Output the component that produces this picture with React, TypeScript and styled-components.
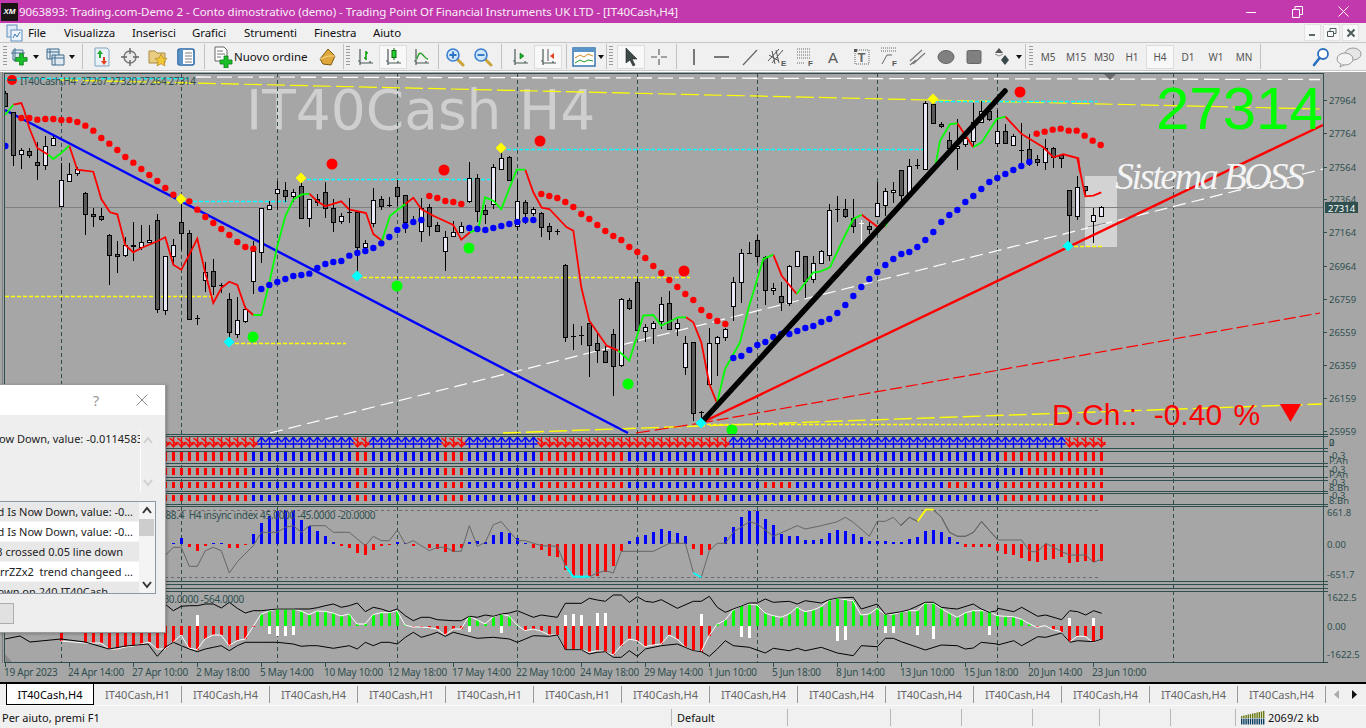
import React from 'react';
import styled, { createGlobalStyle } from 'styled-components';

const UI = '"Noto Sans", "Open Sans", "DejaVu Sans", sans-serif';
const Global = createGlobalStyle`
  html, body { margin: 0; padding: 0; width: 1366px; height: 728px; overflow: hidden; background: #f0f0f0; font-family: ${UI}; }
`;
const Page = styled.div`display: flex; flex-direction: column; width: 1366px; height: 728px; overflow: hidden;`;
const TitleBar = styled.div`display: flex; align-items: center; height: 23px; background: #c238ad; color: #fff; font-size: 11.5px;`;
const Logo = styled.div`width: 17px; height: 18px; margin: 0 1px 0 1px; background: #1a1414; color: #fff; font: italic bold 8px "Liberation Sans", sans-serif; display: flex; align-items: center; justify-content: center;`;
const TitleText = styled.div`flex: 1; white-space: nowrap; opacity: .92; letter-spacing: -.05px;`;
const WinBtn = styled.div`width: 46px; height: 23px; display: flex; align-items: center; justify-content: center;`;
const MenuBar = styled.div`display: flex; align-items: center; height: 20px; background: #f0f0f0; font-size: 11.5px; letter-spacing: -.1px; color: #111; border-bottom: 1px solid #c6c6c6;`;
const MenuIcon = styled.div`width: 28px; display: flex; justify-content: center; box-sizing: border-box;`;
const MenuItem = styled.div<{ $w: number }>`width: ${p => p.$w}px; white-space: nowrap;`;
const MdiGroup = styled.div`margin-left: auto; display: flex; gap: 2px; padding-right: 7px;`;
const MdiBtn = styled.div`width: 17px; height: 17px; background: #f8f8f8; border: 1px solid #e2e2e2; box-sizing: border-box; display: flex; align-items: center; justify-content: center;`;
const ToolBar = styled.div`display: flex; align-items: center; height: 27px; padding-left: 2px; background: #f0f0f0; border-bottom: 1px solid #c6c6c6; flex: none; box-sizing: content-box;`;
const Tool = styled.div<{ $w?: number; $on?: boolean }>`
  width: ${p => p.$w ?? 28}px; height: 24px; flex: none; box-sizing: border-box; display: flex; align-items: center; justify-content: center;
  ${p => p.$on ? 'background:#f8f8f8; border:1px solid #dcdcdc;' : ''}
`;
const Sep = styled.div<{ $w: number }>`width: ${p => p.$w}px; flex: none; height: 25px; display: flex; justify-content: center; &::after { content: ''; width: 1px; background: #c2c2c2; }`;
const Grip = styled.div`height: 21px; flex: none; background: repeating-linear-gradient(to bottom, #9a9a9a 0 1px, transparent 1px 3px); margin: 0 1px 0 1px; width: 4px;`;
const Drop = styled.div<{ $w?: number }>`width: ${p => p.$w ?? 8}px; flex: none; display: flex; justify-content: center; &::after { content: ''; border: 3px solid transparent; border-top: 4px solid #111; border-bottom: 0; }`;
const Spacer = styled.div<{ $w?: number }>`${p => p.$w ? `width:${p.$w}px; flex:none;` : 'flex:1;'}`;
const OrderBtn = styled.div`display: flex; align-items: center; width: 105px; flex: none; gap: 1px; padding-left: 4px; box-sizing: border-box; font-size: 11.5px; color: #111; white-space: nowrap;`;
const Tf = styled(Tool)`font-size: 10px; color: #555; letter-spacing: -.1px;`;
const ChartArea = styled.div`position: relative; height: 613px; flex: none; background: #a6a6a6; overflow: hidden; border-top: 1px solid #fff; box-sizing: border-box;`;
const ChartSvg = styled.svg`display: block; position: absolute; top: -1px; left: 0;`;
const Axis = styled.text`font: 9.5px "Noto Sans", sans-serif; fill: #2f4f4f;`;
const TimeLabel = styled.text`font: 10px "Noto Sans", sans-serif; fill: #2f4f4f; letter-spacing: -.25px;`;
const Legend = styled.text`font: 10px "Noto Sans", sans-serif; fill: #2f4f4f; letter-spacing: -.3px; white-space: pre;`;
const BigSymbol = styled.text`font: 55px "DejaVu Sans", sans-serif; fill: #cfcfcf;`;
const BigPrice = styled.text`font: 60px "Liberation Sans", sans-serif; fill: #00ff00;`;
const Change = styled.text`font: 30px "Liberation Sans", sans-serif; fill: #ff0000; white-space: pre;`;
const Signature = styled.text`font: italic 38px "Liberation Serif", serif; fill: #f4f4f4;`;
const Dialog = styled.div`position: absolute; left: -200px; top: 312px; width: 366px; height: 249px; background: #eeeeee; border: 1px solid #9a9a9a; border-left: 0; box-sizing: border-box; box-shadow: 1px 1px 3px rgba(0,0,0,.25); display: flex; flex-direction: column; font-size: 11px; color: #222;`;
const DialogHead = styled.div`height: 30px; flex: none; background: #fff; display: flex; justify-content: flex-end;`;
const HeadBtn = styled.div`width: 46px; display: flex; align-items: center; justify-content: center; color: #9a9a9a; font-size: 15px;`;
const MsgRow = styled.div`display: flex; height: 61px; margin: 16px 10px 9px 0; flex: none;`;
const MsgText = styled.div`flex: 1; display: flex; justify-content: flex-end; overflow: hidden; white-space: nowrap; height: 100%; border-right: 1px solid #fff; line-height: 15px;`;
const MsgSpan = styled.span`margin-right: -3px;`;
const MsgScroll = styled.div`width: 14px; display: flex; flex-direction: column; justify-content: space-between; align-items: center; padding: 5px 0; box-sizing: border-box;`;
const ListBox = styled.div`display: flex; height: 93px; margin-right: 9px; border: 1px solid #8c98a4; background: #fff; flex: none; box-sizing: border-box;`;
const Rows = styled.div`flex: 1; overflow: hidden; display: flex; flex-direction: column; min-width: 0;`;
const Row = styled.div<{ $alt: boolean; $pr: number }>`height: 20px; flex: none; display: flex; justify-content: flex-end; align-items: center; white-space: nowrap; padding-right: ${p => p.$pr}px; background: ${p => p.$alt ? '#e8e8e8' : '#fff'}; border-bottom: 1px solid #f4f4f4; box-sizing: border-box;`;
const Scroll = styled.div`width: 16px; flex: none; background: #f4f4f4; display: flex; flex-direction: column; align-items: center; justify-content: space-between; position: relative; padding: 4px 0; box-sizing: border-box;`;
const Thumb = styled.div`position: absolute; left: 0; right: 1px; top: 17px; height: 17px; background: #cdcdcd;`;
const DlgBtn = styled.div`width: 100px; height: 21px; margin: 9px 0 0 114px; background: #e1e1e1; border: 1px solid #adadad; box-sizing: border-box; flex: none;`;
const TabBar = styled.div`display: flex; align-items: stretch; height: 21px; flex: none; background: #f0f0f0; border-top: 2px solid #000; padding-left: 6px; box-sizing: content-box; margin-top: -2px; font-size: 11px; color: #666; position: relative;`;
const Tab = styled.div<{ $on?: boolean }>`
  width: 88px; flex: none; box-sizing: border-box; display: flex; align-items: center; justify-content: center; white-space: nowrap;
  ${p => p.$on ? 'background:#fff; color:#000; border:1px solid #000; border-top:0;' : 'position:relative; border-right:1px solid #9a9a9a; margin:2px 0; '}
`;
const TabArrows = styled.div`flex: 1; display: flex; align-items: center; justify-content: flex-end; gap: 13px; padding-right: 9px;`;
const StatusBar = styled.div`display: flex; align-items: center; height: 22px; flex: none; background: #f0f0f0; font-size: 11px; color: #111; border-top: 1px solid #fafafa;`;
const Cell = styled.div<{ $w: number }>`width: ${p => p.$w}px; height: 17px; flex: none; box-sizing: border-box; display: flex; align-items: center; padding-left: 5px; gap: 3px; white-space: nowrap; border-right: 1px solid #b8b8b8;`;
const LeadCell = styled(Cell)`padding-left: 2px;`;
const LastCell = styled(Cell)`border-right: 0;`;

type C = [number, number, number, number, number, string];
const candles: C[] = [
[5,94,107,92,107,'d'],[13,113,156,113,167,'d'],[21,151,155,149,170,'u'],[29,152,156,149,159,'d'],[37,163,166,143,181,'d'],[45,147,166,137,171,'u'],[53,139,146,137,147,'u'],[61,181,207,164,207,'u'],[69,175,182,164,183,'u'],[77,170,174,168,177,'u'],[85,194,215,193,236,'d'],[93,215,217,209,228,'d'],[101,217,220,209,222,'d'],[109,236,256,235,286,'d'],[117,255,257,242,274,'d'],[125,246,256,238,258,'u'],[133,246,248,223,262,'s'],[141,243,248,226,251,'u'],[149,241,243,226,243,'u'],[157,221,310,215,314,'d'],[165,257,311,257,316,'u'],[173,246,257,240,267,'u'],[181,223,234,204,251,'d'],[189,234,320,231,321,'d'],[197,319,320,316,326,'s'],[205,273,281,263,293,'u'],[213,272,287,260,296,'d'],[221,286,287,284,294,'s'],[229,300,333,294,342,'d'],[237,321,335,298,339,'u'],[245,310,322,307,324,'u'],[253,252,282,242,295,'u'],[261,209,253,209,264,'u'],[269,206,210,202,211,'u'],[277,190,194,182,211,'u'],[285,191,197,183,203,'d'],[293,193,197,190,203,'u'],[301,187,219,181,220,'d'],[309,200,219,200,228,'u'],[317,200,203,195,207,'d'],[325,193,209,183,219,'d'],[333,209,223,200,233,'d'],[341,217,222,214,225,'u'],[349,213,214,199,224,'s'],
[357,213,248,213,277,'d'],[365,244,248,241,249,'u'],[373,201,224,189,228,'u'],[381,200,207,197,211,'d'],[389,206,207,198,208,'s'],[397,188,197,181,207,'d'],[405,196,223,196,234,'d'],[413,222,223,217,225,'s'],[421,209,232,199,243,'u'],[429,208,227,205,237,'d'],[437,226,232,223,233,'d'],[445,238,252,232,272,'u'],[453,233,237,222,238,'u'],[461,227,233,223,233,'u'],[469,179,202,163,204,'u'],[477,179,212,175,223,'d'],[485,211,215,206,225,'d'],[493,168,205,165,210,'u'],[501,159,170,150,170,'u'],[509,158,181,157,181,'d'],[517,202,227,181,231,'u'],[525,203,214,201,225,'d'],[533,210,214,208,217,'u'],[541,214,228,213,238,'d'],[549,227,232,224,241,'d'],[557,232,233,230,236,'s'],[565,266,338,265,343,'d'],[573,337,338,325,351,'s'],[581,336,337,327,346,'s'],[589,324,346,324,378,'d'],[597,344,351,333,364,'d'],[605,352,363,347,364,'d'],[613,335,367,330,397,'d'],[621,300,366,299,368,'u'],[629,301,309,299,311,'d'],[637,283,331,280,331,'d'],[645,328,332,325,343,'u'],[653,324,329,322,345,'u'],[661,305,322,298,330,'u'],[669,304,330,292,330,'d'],[677,324,329,320,337,'u'],[685,344,368,337,376,'u'],[693,343,414,343,422,'d'],[701,413,414,412,425,'s'],[709,344,385,329,387,'u'],[717,338,344,337,377,'u'],[725,330,338,329,342,'u'],[733,283,307,278,322,'u'],[741,254,283,250,304,'u'],[749,254,255,243,255,'s'],[757,241,257,236,264,'d'],[765,258,291,257,306,'d'],[773,289,291,284,296,'u'],[781,297,303,283,312,'d'],[789,267,304,266,307,'u'],[797,252,267,252,268,'u'],[805,257,282,257,299,'d'],[813,264,280,257,284,'u'],[821,252,264,251,265,'u'],[829,211,256,205,262,'u'],[837,210,211,197,223,'s'],[845,210,217,200,219,'d'],[853,219,227,200,234,'d'],[869,227,230,223,235,'d'],[877,204,217,183,218,'u'],[885,192,206,189,217,'u'],[893,191,193,183,204,'u'],[901,171,196,171,205,'d'],[909,167,197,160,198,'u'],[917,166,167,160,170,'s'],[925,104,170,102,170,'u'],[933,105,124,102,125,'d'],[941,125,127,123,129,'d'],[949,141,149,133,150,'d'],[957,147,149,120,171,'u'],[965,139,145,137,148,'u'],[973,123,142,104,147,'u'],[981,112,123,102,124,'u'],[989,112,120,108,122,'d'],[997,132,144,111,148,'u'],[1005,132,144,125,145,'d'],[1013,137,146,135,147,'u'],[1021,151,152,124,167,'s'],[1029,150,160,135,167,'d'],[1037,160,163,156,167,'d'],[1045,149,163,140,171,'u'],[1053,149,158,148,169,'d'],[1061,156,159,155,169,'d'],[1069,191,216,191,246,'d'],[1077,188,217,177,221,'u'],[1085,187,191,187,198,'d'],[1093,216,222,209,244,'u'],[1101,208,217,207,217,'u'],
];
const pts = (ox: number, oy: number, a: number[][]) => a.map(([x, y]) => `${(ox + x / 3).toFixed(1)},${(oy + y / 3).toFixed(1)}`).join(' ');
const dots = (ox: number, oy: number, a: number[][]) => a.map(([x, y]) => [ox + x / 3, oy + y / 3]);

const redLine: [number, number, number[][]][] = [
  [0,74,[[40,95],[64,90],[72,110],[88,165],[112,225],[130,236],[145,245]]],
  [0,74,[[208,218],[232,290],[280,296],[304,378],[330,418],[352,424],[376,516],[400,538],[424,525],[472,505],[496,493],[520,575],[544,590],[568,545],[592,497],[616,600],[640,690],[664,645],[688,626],[712,636],[736,705],[760,726]]],
  [0,74,[[928,362],[952,385],[976,400],[1024,385],[1048,410]]],
  [350,100,[[0,332],[48,342],[70,405],[96,425]]],
  [350,100,[[166,315],[190,296],[214,330],[250,350],[310,378],[334,422],[360,400]]],
  [350,100,[[526,212],[550,280],[575,326],[598,330],[650,385],[670,395],[694,565],[718,665],[770,740],[805,755]]],
  [350,100,[[1008,655],[1030,670],[1054,730],[1078,855],[1100,910]]],
  [680,80,[[280,527],[305,590],[350,645]]],
  [680,80,[[545,407],[590,442],[616,442]]],
  [680,80,[[832,133],[880,205]]],
  [680,80,[[976,113],[1025,165],[1090,205],[1120,235],[1150,226],[1195,238],[1200,280]]],
  [1000,74,[[232,255],[256,370],[280,368],[304,358]]],
];
const greenLine: [number, number, number[][]][] = [
  [0,74,[[16,125],[40,95]]],
  [0,74,[[145,245],[160,258],[184,240],[208,218]]],
  [0,74,[[760,726],[784,726],[808,630],[832,520],[856,430],[880,380],[904,365],[928,362]]],
  [350,100,[[96,425],[120,350],[166,315]]],
  [350,100,[[360,400],[385,390],[405,295],[430,305],[454,330],[500,212],[526,212]]],
  [350,100,[[805,755],[838,785],[880,650],[910,648],[934,680],[985,655],[1008,655]]],
  [680,80,[[112,970],[135,870],[180,790],[205,690],[250,540],[280,527]]],
  [680,80,[[350,645],[400,580],[420,578],[450,565],[490,480],[520,420],[545,407]]],
  [680,80,[[616,442],[640,395],[690,350],[740,290],[765,265],[780,185],[810,135],[832,133]]],
  [680,80,[[880,205],[905,190],[950,120],[976,113]]],
];
const redDots = [
  ...dots(0,74,[[64,135],[88,135],[112,140],[136,138],[160,138],[184,141],[208,141],[232,147],[256,158],[280,173],[304,195],[328,212],[352,231],[376,252],[400,269],[424,288],[448,306],[472,324],[496,345],[520,365],[544,377],[568,385],[592,410],[616,432],[640,450],[664,468],[688,486],[712,507],[736,522],[760,527]]),
  ...dots(350,100,[[238,291],[262,297],[286,306],[310,309],[334,315],[574,285],[598,291],[622,297],[646,309],[670,324],[694,345],[718,360],[742,378],[766,396],[790,411],[814,423],[838,444],[862,459],[886,477],[910,501],[934,522],[958,543],[982,564],[1006,585],[1030,603],[1054,633],[1078,651],[1102,666],[1126,675]]),
  ...dots(1000,74,[[110,182],[134,176],[158,170],[182,167],[206,173],[230,173],[254,188],[278,203],[302,216]]),
];
const blueDots = [
  ...dots(0,74,[[16,219],[784,648],[808,636],[832,627],[856,618],[880,609],[904,606],[928,602],[952,585],[976,573],[1000,567],[1024,564],[1048,548]]),
  ...dots(350,100,[[22,462],[46,456],[70,447],[94,433],[118,414],[142,393],[166,381],[190,369],[214,363],[358,387],[382,390],[406,393],[430,387],[454,381],[478,375],[502,369],[526,363],[550,363]]),
  ...dots(680,80,[[160,837],[184,831],[208,813],[232,798],[256,789],[280,774],[304,765],[328,765],[352,756],[376,747],[400,741],[424,729],[448,720],[472,702],[496,678],[520,651],[544,624],[568,600],[592,579],[616,558],[640,540],[664,525],[688,519],[712,504],[736,483],[760,459],[784,429],[808,408],[832,393],[856,369],[880,351],[904,330],[928,309],[952,297],[976,285],[1000,273],[1024,261],[1048,249]]),
];
const gridX = [61, 181, 277, 397, 517, 637, 757, 877, 997, 1173];
const paneLines = [435, 437, 449, 452, 464, 467, 478, 481, 492, 494, 505, 507, 582, 585, 589, 592, 663];
const prices: [string, number][] = [['27964',105],['27764',138],['27564',172],['27364',204],['27164',237],['26964',271],['26759',304],['26559',337],['26359',370],['26159',403],['25959',436]];
const times: [string, number][] = [['19 Apr 2023',4],['24 Apr 14:00',68],['27 Apr 10:00',132],['2 May 18:00',196],['5 May 14:00',260],['10 May 10:00',324],['12 May 18:00',388],['17 May 14:00',452],['22 May 10:00',516],['24 May 18:00',580],['29 May 14:00',644],['1 Jun 10:00',708],['5 Jun 18:00',772],['8 Jun 14:00',836],['13 Jun 10:00',900],['15 Jun 18:00',964],['20 Jun 14:00',1028],['23 Jun 10:00',1092]];

const barX: number[] = [];
for (let x = 5; x <= 1101; x += 8) barX.push(x);
const inRanges = (x: number, blue: number[][]) => blue.some(([a, b]) => x >= a && x <= b);
const panes: [number, number, number[][]][] = [
  [453, 9, [[253,349],[372,437],[469,539],[628,781],[789,997]]],
  [469, 7, [[253,349],[372,437],[469,539],[725,1021]]],
  [483, 6, [[253,349],[372,437],[469,539],[622,757],[797,941],[973,997]]],
  [496, 6, [[253,349],[372,437],[469,539],[725,997]]],
];
const arrowBlue = [[260,349],[372,437],[469,537],[733,1061]];

type H = [number, number];
const seq = (ox: number, oy: number, v0: number, tops: (number | null)[]): H[] =>
  tops.flatMap((t, i) => t === null ? [] : [[5 + 8 * Math.round((ox + (v0 + i * 24) / 3 - 5) / 8), oy + t / 3] as H]);
const hist6: H[] = [
  ...seq(150,430,70,[342,327,353,366,350,342,342,356,356,347,315,282,262,245,243,243,273,290,305,321,340,350,356,372,378,362,350,347,338,343,350,null,358,360,368,368,358,338,336,338,318,309,313,327,343,356,362,380,384,422,440,440,440,440]),
  ...seq(550,430,166,[428,412,367,336,324,318,309,300,306,312,321,360,378,363,null,324,294,264,246,246,270,288,315,321,321,333,333,330,312,303,306,315,324,336,336,336,338]),
  ...seq(900,420,5,[368,360,355,335,333,340,355,370,384,384,384,384,395,405,408,417,425,428,422,420,413,432,430,425,430,425]),
];
const hist8: H[] = [
  [61,642],[85,644],[93,644],[101,644],[109,650],[117,650],[125,648],[133,647],[141,645],[149,643],
  ...seq(150,430,22,[660,660,640,618,657,662,630,618,618,650,635,630,593,556,546,540,540,540,546,557,546,547,552,561,555,585,585,557,551,551,545,588,594,594,596,600,618,600,600,561,573,585,564,555,561,588,605,600,606,618,618,662,662,662,670,665]),
  ...seq(550,430,166,[668,678,650,630,635,653,648,645,618,630,653,665,668,620,586,574,543,530,525,528,552,560,565,555,535,548,543,533,514,507,512,515,558,555,538,556,556,549,545,545,522,522,538,552,565,552,545,545,547,560]),
  ...seq(900,420,317,[592,593,600,614,625,620,632,638,670,652,652,670,660]),
];
const whiteBars: [number, number][] = [
  ...([[142,558],[358,614],[382,621],[406,621],[430,617],[958,608],[1054,611],[1246,557],[1270,555],[1294,557],[1342,552]] as number[][]).map(([v, y]) => [150 + v / 3, 430 + y / 3] as [number, number]),
  ...([[574,624],[598,627],[862,635],[886,632],[1006,611],[1030,611],[1102,618],[1150,630],[1318,618],[142,553],[166,553],[454,556]] as number[][]).map(([v, y]) => [550 + v / 3, 430 + y / 3] as [number, number]),
  ...([[509,597],[581,597],[53,647],[101,660],[269,647]] as number[][]).map(([v, y]) => [900 + v / 3, 420 + y / 3] as [number, number]),
];
const upper8 = [
  pts(150,430,[[45,525],[70,545],[94,532],[118,530],[142,530],[166,525],[190,525],[214,537],[238,520],[262,538],[286,552],[310,545],[334,545],[382,540],[430,540],[478,540],[502,536],[526,530],[550,525],[574,535],[598,530],[622,522],[646,548],[670,535],[694,540],[718,548],[742,540],[766,560],[790,575],[814,565],[838,565],[862,572],[910,575],[934,575],[958,562],[982,565],[1006,558],[1030,562],[1054,555],[1078,552],[1102,545],[1126,555],[1150,565],[1174,558],[1222,565],[1246,523],[1294,523],[1318,508],[1342,513]]),
  pts(550,430,[[166,517],[190,498],[214,498],[238,520],[262,503],[286,517],[310,520],[334,512],[382,538],[430,517],[454,517],[478,502],[502,535],[526,550],[550,540],[598,522],[622,522],[646,510],[670,520],[718,517],[742,525],[766,515],[814,522],[838,512],[862,507],[910,505],[934,540],[982,525],[1006,556],[1054,548],[1078,542],[1126,520],[1150,520],[1174,535],[1198,538],[1222,540],[1270,525],[1294,540],[1318,550],[1342,545]]),
  pts(900,420,[[293,568],[341,578],[365,565],[413,592],[437,588],[485,602],[509,575],[533,578],[557,588],[581,575],[605,583]]),
].join(' ');
const lower8 = [
  '5,640 20,637 30,643 61,640 85,643 109,650 126,647 148,645',
  pts(150,430,[[22,682],[46,655],[70,640],[94,650],[118,660],[142,668],[166,660],[190,655],[214,650],[238,665],[262,650],[286,640],[310,640],[334,640],[382,640],[430,645],[454,652],[478,650],[502,650],[550,658],[598,650],[622,660],[646,640],[670,650],[694,640],[718,640],[742,645],[766,625],[790,610],[814,625],[838,618],[862,610],[886,622],[910,610],[958,622],[982,628],[1030,625],[1078,630],[1102,640],[1126,630],[1150,620],[1198,622],[1222,618],[1246,662],[1294,662],[1318,675],[1342,670]]),
  pts(550,430,[[166,668],[190,685],[214,685],[238,665],[262,682],[286,660],[334,650],[382,645],[430,665],[454,668],[478,682],[502,660],[526,635],[550,650],[598,655],[646,672],[670,658],[718,665],[742,658],[766,665],[814,655],[862,672],[910,680],[934,650],[982,653],[1006,628],[1030,628],[1054,638],[1126,663],[1174,648],[1222,650],[1246,660],[1270,657],[1294,640],[1342,645]]),
  pts(900,420,[[293,678],[341,665],[365,680],[413,653],[437,655],[485,642],[509,670],[533,665],[581,668],[605,660]]),
].join(' ');
const grayA = pts(150,430,[[45,380],[70,355],[94,355],[118,412],[142,412],[166,365],[190,355],[214,365],[238,432],[262,398],[310,350],[334,310],[382,310],[406,295],[430,290],[454,310],[478,290],[526,290],[550,310],[598,310],[646,350],[670,322],[694,335],[718,335],[742,303],[766,345],[790,335],[838,365],[862,355],[886,355],[910,367],[934,367],[958,290],[982,352],[1006,340],[1030,287],[1054,278],[1102,335],[1126,335],[1174,350],[1222,352],[1246,410]]);
const grayB = pts(550,430,[[118,443],[142,432],[166,425],[190,432],[214,367],[310,367],[358,343],[406,343],[430,430]]);
const grayC = pts(550,430,[[454,445],[478,365],[502,343],[526,343],[550,310],[598,278],[622,285],[670,322],[742,290],[766,300],[814,290],[862,278],[886,265],[910,280],[958,322],[982,277],[1006,277],[1030,265],[1054,290],[1078,265],[1102,277]]);
const grayD = pts(550,430,[[1150,243],[1174,265],[1198,310],[1222,322],[1246,322],[1270,310],[1294,278],[1342,330]]);
const grayE = pts(900,420,[[0,320],[28,295],[53,307]]);
const grayF = pts(900,420,[[101,272],[125,295],[149,340],[173,352],[197,352],[221,340],[245,307],[269,335],[293,363],[365,363],[389,398],[413,398],[437,373],[461,385],[485,398],[509,408],[557,408],[581,430],[605,420]]);

const Diamond = ({ x, y, c }: { x: number; y: number; c: string }) => <path d={`M${x} ${y - 5.5}L${x + 5.5} ${y}L${x} ${y + 5.5}L${x - 5.5} ${y}Z`} fill={c} />;

const Chart = () => (
  <ChartSvg width={1366} height={614} viewBox="0 72 1366 614">
    <rect x={0} y={72} width={1366} height={614} fill="#a6a6a6" />
    <BigSymbol x={246} y={130}>IT40Cash H4</BigSymbol>
    <rect x={1085} y={177} width={32} height={71} fill="#d3d3d3" />
    {gridX.map(x => <line key={x} x1={x + .5} x2={x + .5} y1={74} y2={663} stroke="#2f4f4f" strokeDasharray="4 3" />)}
    <line x1={4} x2={1324} y1={208.5} y2={208.5} stroke="#808080" />
    <line x1={5} x2={190} y1={79.5} y2={79.5} stroke="#00ffff" strokeWidth={1.4} strokeDasharray="4 2" />
    <line x1={196} y1={78} x2={1320} y2={80.5} stroke="#fff" strokeWidth={1.3} strokeDasharray="15 6" />
    <line x1={60} y1={81} x2={1320} y2={110} stroke="#ffff00" strokeWidth={1.2} strokeDasharray="18 5" />
    <line x1={270} y1={434} x2={1323} y2={170} stroke="#fff" strokeWidth={1.2} strokeDasharray="13 6" />
    <line x1={1088} y1={228} x2={1106} y2={224} stroke="#888" strokeWidth={1.2} />
    <line x1={503} y1={434} x2={1322} y2={405} stroke="#ffff00" strokeWidth={1.4} strokeDasharray="18 5" />
    <line x1={636} y1={434} x2={701} y2={424} stroke="#ff0000" strokeWidth={1.2} strokeDasharray="14 5" />
    <line x1={701} y1={424} x2={1320} y2={314} stroke="#ff0000" strokeWidth={1.2} strokeDasharray="12 4" />
    <line x1={5} y1={111} x2={628} y2={434} stroke="#0000ff" strokeWidth={2.4} />
    {([[181,202,287,'#00ffff'],[301,180,490,'#00ffff'],[501,150,923,'#00ffff'],[933,102,1097,'#00ffff'],[5,297,215,'#ffff00'],[229,344,346,'#ffff00'],[357,278,690,'#ffff00'],[701,425,1060,'#ffff00'],[1068,247,1103,'#ffff00']] as [number,number,number,string][]).map(([a,y,b,c]) => <line key={`${a}-${y}`} x1={a} x2={b} y1={y+.5} y2={y+.5} stroke={c} strokeWidth={1.4} strokeDasharray="4 2" />)}
    <g shapeRendering="crispEdges">
      {candles.map(([x, t, b, wt, wb, k]) => (
        <g key={x}>
          <line x1={x + .5} x2={x + .5} y1={wt} y2={wb} stroke="#000" />
          {k === 's' ? <rect x={x - 2} y={t} width={5} height={Math.max(b - t, 1)} fill="#000" /> :
            <rect x={x - 1.5} y={t + .5} width={4} height={b - t} fill={k === 'u' ? '#ebebf8' : '#595959'} stroke="#000" />}
        </g>
      ))}
      <line x1={861.5} x2={861.5} y1={221} y2={247} stroke="#fff" />
      <line x1={859} x2={864} y1={224.5} y2={224.5} stroke="#fff" />
    </g>
    {redLine.map(([ox, oy, a], i) => <polyline key={i} points={pts(ox, oy, a)} fill="none" stroke="#ff0000" strokeWidth={1.8} />)}
    {greenLine.map(([ox, oy, a], i) => <polyline key={i} points={pts(ox, oy, a)} fill="none" stroke="#00ff00" strokeWidth={1.8} />)}
    {redDots.map(([x, y], i) => <circle key={i} cx={x} cy={y} r={3.2} fill="#ff0000" />)}
    {blueDots.map(([x, y], i) => <circle key={i} cx={x} cy={y} r={3.2} fill="#0000ff" />)}
    {[[332,165],[540,142],[444,171],[684,272],[1020,93]].map(([x, y]) => <circle key={x} cx={x} cy={y} r={5.5} fill="#ff0000" />)}
    {[[253,338],[397,287],[469,249],[628,385],[732,431]].map(([x, y]) => <circle key={x} cx={x} cy={y} r={5.5} fill="#00ff00" />)}
    <line x1={701} y1={424} x2={1323} y2={126} stroke="#ff0000" strokeWidth={2.4} />
    <line x1={701} y1={424} x2={1005} y2={92} stroke="#000" strokeWidth={5.5} strokeLinecap="round" />
    {[[181,200],[301,179],[501,149],[933,100]].map(([x, y]) => <Diamond key={x} x={x} y={y} c="#ffff00" />)}
    {[[229,343],[357,277],[701,424],[1068,247]].map(([x, y]) => <Diamond key={x} x={x} y={y} c="#00ffff" />)}
    <BigPrice x={1156} y={130}>27314</BigPrice>
    <Signature x={1115} y={190} textLength={190} lengthAdjust="spacing">Sistema BOSS</Signature>
    <Change x={1052} y={426}>D.Ch.:  -0.40 <tspan dx={3}>%</tspan></Change>
    <path d="M1280 405h21l-10.5 18z" fill="#ff0000" />
    <circle cx={12} cy={81} r={5} fill="#ff0000" />
    <rect x={8} y={80} width={8} height={2} fill="#2f4f4f" />
    <Legend x={20} y={86}>IT40Cash,H4  27267 27320 27264 27314</Legend>
    <path d="M1103 74h14l-7 7z" fill="#6b6b6b" />
    <path d="M4 654v9h8z" fill="#8a8a8a" />
    {/* sub windows */}
    <g strokeWidth={1.4}>
      {barX.map(x => {
        const blue = inRanges(x, arrowBlue);
        const c = blue ? '#0000ff' : '#ff0000';
        return blue
          ? <path key={x} d={`M${x + .5} 449V438M${x - 3.5} 443L${x + .5} 438L${x + 4.5} 443M${x - 3.5} 445H${x + 4.5}`} stroke={c} fill="none" />
          : <path key={x} d={`M${x + .5} 438V448M${x - 3.5} 443L${x + .5} 448L${x + 4.5} 443M${x - 3.5} 439L${x + 4.5} 446`} stroke={c} fill="none" />;
      })}
    </g>
    <g shapeRendering="crispEdges">
      {panes.map(([y, h, blue]) => barX.map(x => <rect key={`${y}-${x}`} x={x - 1} y={y} width={3} height={h} fill={inRanges(x, blue) ? '#0000ff' : '#ff0000'} />))}
      {hist6.map(([x, y], i) => <rect key={i} x={x - 1} y={Math.min(y, 545)} width={3} height={Math.abs(y - 545)} fill={y < 545 ? '#0000ff' : '#ff0000'} />)}
      {whiteBars.map(([x, y], i) => <rect key={i} x={Math.round((x - 5) / 8) * 8 + 4} y={Math.min(y, 627)} width={3} height={Math.abs(y - 627)} fill="#fff" />)}
      {hist8.map(([x, y], i) => <rect key={i} x={x - 1} y={Math.min(y, 627)} width={3} height={Math.abs(y - 627)} fill={y < 627 ? '#00ff00' : '#ff0000'} />)}
      <line x1={165} x2={1100} y1={511.5} y2={511.5} stroke="#6a6a6a" strokeDasharray="3 3" />
      <line x1={165} x2={1100} y1={578.5} y2={578.5} stroke="#6a6a6a" strokeDasharray="3 3" />
    </g>
    {[grayA, grayB, grayC, grayD, grayE, grayF].map((p, i) => <polyline key={i} points={p} fill="none" stroke="#666" strokeWidth={1} />)}
    <polyline points={pts(150,430,[[1246,412],[1270,443],[1318,443]])} fill="none" stroke="#00ffff" strokeWidth={1.8} />
    <polyline points={pts(550,430,[[46,410],[70,443],[118,443]])} fill="none" stroke="#00ffff" strokeWidth={1.8} />
    <polyline points={pts(550,430,[[430,432],[454,445]])} fill="none" stroke="#00ffff" strokeWidth={1.8} />
    <polyline points={pts(900,420,[[53,307],[77,272],[101,272]])} fill="none" stroke="#ffff00" strokeWidth={1.8} />
    <polyline points={hist8.map(([x, y]) => `${x},${y}`).join(' ')} fill="none" stroke="#fff" strokeWidth={1} />
    <polyline points={upper8} fill="none" stroke="#000" strokeWidth={1} />
    <polyline points={lower8} fill="none" stroke="#000" strokeWidth={1} />
    <Legend x={160} y={520}>288.4  H4 insync index 45.0000 -45.0000 -20.0000</Legend>
    <Legend x={158} y={604}>230.0000 -564.0000</Legend>
    {/* frame */}
    <g shapeRendering="crispEdges">
      <rect x={4.5} y={74.5} width={1319} height={588.5} fill="none" stroke="#2f4f4f" />
      {paneLines.map(y => <line key={y} x1={4} x2={1328} y1={y + .5} y2={y + .5} stroke="#2f4f4f" />)}
      <rect x={0} y={72} width={4} height={592} fill="#a6a6a6" />
      <line x1={2.5} x2={2.5} y1={73} y2={664} stroke="#808080" />
      {prices.map(([t, y]) => <line key={t} x1={1324} x2={1327} y1={y - 4} y2={y - 4} stroke="#2f4f4f" />)}
      {[0,1,2,3,4,5,6,7,8,9,10,11,12,13,14,15,16,17].map(i => <line key={i} x1={5.5 + 64 * i} x2={5.5 + 64 * i} y1={663} y2={668} stroke="#2f4f4f" />)}
    </g>
    {prices.map(([t, y]) => <Axis key={t} x={1329} y={y}>{t}</Axis>)}
    <Axis x={1329} y={447}>2</Axis><Axis x={1329} y={447}>0</Axis>
    {[[460,465],[474,479],[487,492],[500,505]].map(([a, b], i) => <g key={i}><Axis x={1329} y={a}>-0.3</Axis><Axis x={1329} y={b}>{i < 2 ? 'P.An' : '8.Bn'}</Axis></g>)}
    <Axis x={1327} y={517}>661.8</Axis><Axis x={1327} y={549}>0.00</Axis><Axis x={1327} y={579}>-651.7</Axis>
    <Axis x={1327} y={602}>1622.5</Axis><Axis x={1327} y={631}>0.00</Axis><Axis x={1327} y={659}>-1622.5</Axis>
    <rect x={1325} y={203} width={33} height={11} fill="#2f4f4f" />
    <Axis x={1328} y={212.5} style={{ fill: '#fff' }}>27314</Axis>
    {times.map(([t, x]) => <TimeLabel key={t} x={x} y={677}>{t}</TimeLabel>)}
  </ChartSvg>
);

const Ic = ({ children, w = 20, h = 20 }: { children: React.ReactNode; w?: number; h?: number }) => <svg width={w} height={h} viewBox={`0 0 ${w} ${h}`}>{children}</svg>;
const Plus = ({ x = 0, y = 0 }: { x?: number; y?: number }) => <path transform={`translate(${x} ${y})`} d="M10 7h4v4h4v4h-4v4h-4v-4H6v-4h4z" fill="#19c02a" stroke="#0c7a18" strokeWidth=".8" />;
const AxesG = () => <path d="M5 2v14h13M3 14h2M5 18v-2M15 14v2" stroke="#4b5a57" strokeWidth="1.2" fill="none" />;
const Lens = ({ sign }: { sign: string }) => <>
  <path d="M12 12l6 6" stroke="#c9a23a" strokeWidth="3" strokeLinecap="round" />
  <circle cx="8" cy="8" r="6" fill="#cfe6fb" stroke="#3a7fd0" strokeWidth="1.6" />
  <path d={sign} stroke="#2a6fc0" strokeWidth="1.8" />
</>;
const icons: Record<string, React.ReactNode> = {
  newChart: <Ic><path d="M3 3h10v10H3z M1 6h14M5 1v14" stroke="#46708f" fill="#dbe8f2" strokeWidth="1" /><g transform="scale(.95)"><Plus /></g></Ic>,
  profiles: <Ic><path d="M1 2h12v10H1z" fill="#dfeaf3" stroke="#3f6b8b" /><path d="M1 5h12M4 2v10" stroke="#3f6b8b" /><path d="M6 8h12v10H6z" fill="#dfeaf3" stroke="#3f6b8b" /><path d="M6 11h12M9 8v10" stroke="#3f6b8b" /></Ic>,
  market: <Ic><path d="M3 1h12l2 2v16H3z" fill="#eaf2f9" stroke="#7ea3bf" /><path d="M8 3l3 4H9v4H7V7H5z" fill="#22aa33" /><path d="M12 18l-3-4h2v-4h2v4h2z" fill="#e2401c" /></Ic>,
  target: <Ic><circle cx="10" cy="10" r="6" fill="#e8e8e8" stroke="#777" strokeWidth="1.4" /><path d="M10 1v6M10 13v6M1 10h6M13 10h6" stroke="#666" strokeWidth="1.4" /></Ic>,
  folder: <Ic><path d="M1 4h6l2 2h8v10H1z" fill="#e9cd85" stroke="#a98a3f" /><path d="M13 7l2 4 4 .5-3 3 1 4.5-4-2.3L9 19l1-4.5-3-3 4-.5z" fill="#f2c83a" stroke="#b0851a" strokeWidth=".7" /></Ic>,
  nav: <Ic><rect x="2" y="2" width="16" height="16" rx="2" fill="#fff" stroke="#2a6aa8" strokeWidth="1.6" /><rect x="3" y="3" width="4" height="14" fill="#5a93c8" /><path d="M9 6h7M9 9h7M9 12h7M9 15h7" stroke="#7a7a7a" /></Ic>,
  order: <Ic w={21} h={22}><path d="M3 1h9l3 3v11H3z" fill="#fff" stroke="#666" /><path d="M5 5h6M5 8h8M5 11h4" stroke="#777" /><g transform="translate(2 3)"><Plus /></g></Ic>,
  auto: <Ic><path d="M3 12L11 2l7 7-4 9-8-1z" fill="#e0a83c" stroke="#7c5a12" /><path d="M3 12l8-3 7 0" stroke="#f6d88a" fill="none" /></Ic>,
  bars: <Ic><AxesG /><path d="M11 4v9M9 11h2M11 6h2" stroke="#10a010" strokeWidth="1.6" /></Ic>,
  candle: <Ic><AxesG /><path d="M11 1v12" stroke="#0a6a0a" /><rect x="9" y="3.5" width="4" height="7" fill="#25d035" stroke="#0a6a0a" /></Ic>,
  line: <Ic><AxesG /><path d="M6 12c2-8 4-6 6-4s3 4 5 4" stroke="#1aa01a" strokeWidth="1.3" fill="none" /></Ic>,
  zin: <Ic><Lens sign="M4.5 8h7M8 4.5v7" /></Ic>,
  zout: <Ic><Lens sign="M4.5 8h7" /></Ic>,
  scroll: <Ic><AxesG /><path d="M10 6l4 3-4 3z" fill="#18b52a" stroke="#0a6a0a" strokeWidth=".6" /></Ic>,
  autoscroll: <Ic><AxesG /><path d="M16 6l-4 3 4 3z" fill="#e2401c" /><path d="M10 2v12" stroke="#555" /></Ic>,
  indic: <Ic w={24} h={22}><rect x="1" y="2" width="22" height="18" fill="#fff" stroke="#2a6aa8" strokeWidth="1.4" /><rect x="1" y="2" width="22" height="4" fill="#5a93c8" /><path d="M3 12l5-3 4 2 4-3 5 2" stroke="#d08a1a" fill="none" /><path d="M3 17l5-3 4 2 4-2 5 1" stroke="#1a9a2a" fill="none" /></Ic>,
  cursor: <Ic><path d="M5 1v15l4-3 3 6 2-1-3-6h5z" fill="#3d4a4a" stroke="#222" strokeWidth=".6" /></Ic>,
  cross: <Ic><path d="M10 2v6M10 12v6M2 10h6M12 10h6" stroke="#555" strokeWidth="1.1" /></Ic>,
  v: <Ic><path d="M10 2v16" stroke="#444" strokeWidth="1.4" /></Ic>,
  h: <Ic><path d="M2 10h15" stroke="#444" strokeWidth="1.4" /></Ic>,
  trend: <Ic><path d="M3 18L17 3" stroke="#666" strokeWidth="1.2" /></Ic>,
  channel: <Ic w={22} h={22}><path d="M1 15L12 3M5 17L16 4M2 9l10 6M5 5l3 13M9 4l3 13" stroke="#555" fill="none" /><text x="14" y="20" fontSize="8" fontWeight="bold" fill="#555" fontFamily="Liberation Sans">E</text></Ic>,
  fib: <Ic w={22} h={22}><path d="M2 3h14M2 6h14M2 9h14M2 12h14M2 17h8" stroke="#666" strokeDasharray="1 1" /><text x="13" y="20" fontSize="8" fontWeight="bold" fill="#555" fontFamily="Liberation Sans">F</text></Ic>,
  a: <Ic><text x="4" y="16" fontSize="15" fill="#555" fontFamily="Liberation Sans">A</text></Ic>,
  t: <Ic><rect x="3" y="3" width="14" height="14" fill="none" stroke="#666" strokeDasharray="1 1" /><rect x="2" y="2" width="3" height="3" fill="#555" /><text x="5.5" y="15" fontSize="13" fontWeight="bold" fill="#666" fontFamily="Liberation Sans">T</text></Ic>,
  fan: <Ic w={22} h={22}><path d="M2 2h15M2 5h15" stroke="#666" strokeDasharray="1 1" /><path d="M3 18L8 9h5" stroke="#666" fill="none" /><text x="13" y="20" fontSize="8" fontWeight="bold" fill="#555" fontFamily="Liberation Sans">F</text></Ic>,
  par: <Ic><path d="M2 14L14 3M5 17L17 6M2 18L8 13" stroke="#777" strokeWidth="1.2" fill="none" /></Ic>,
  ell: <Ic><ellipse cx="10" cy="10" rx="8" ry="6.5" fill="#808080" stroke="#666" /></Ic>,
  rect: <Ic><rect x="3" y="3.5" width="14" height="13" rx="1.5" fill="#808080" stroke="#666" /></Ic>,
  arrows: <Ic><path d="M7 1l4 5H3z" fill="#555" /><path d="M3 7l4 2 4-2" stroke="#888" fill="none" /><path d="M13 8l4 5-4 5-4-5z" fill="#3a4a4a" /></Ic>,
  search: <Ic><circle cx="12" cy="7" r="5" fill="#fff" stroke="#2a6fc0" strokeWidth="1.8" /><path d="M8.5 11L3 18" stroke="#2a6fc0" strokeWidth="2.6" strokeLinecap="round" /></Ic>,
  chat: <Ic w={26} h={22}><ellipse cx="17" cy="8" rx="8" ry="6" fill="#e6e6e6" stroke="#9a9a9a" /><ellipse cx="9" cy="13" rx="8" ry="6" fill="#f2f2f2" stroke="#9a9a9a" /><path d="M5 18l-1 3 4-2" fill="#f2f2f2" stroke="#9a9a9a" /></Ic>,
};

const tabs = ['H4','H1','H4','H4','H1','H1','H1','H4','H4','H4','H4','H4','H4','H4','H4'];
const Chevron = ({ up, c, w = 12 }: { up?: boolean; c: string; w?: number }) => <svg width={w} height={8} viewBox="0 0 12 8"><path d={up ? 'M2 7l4-5 4 5' : 'M2 1l4 5 4-5'} fill="none" stroke={c} strokeWidth="2" /></svg>;

export default function App() {
  return (
    <Page>
      <Global />
      <TitleBar>
        <Logo>XM</Logo>
        <TitleText>9063893: Trading.com-Demo 2 - Conto dimostrativo (demo) - Trading Point Of Financial Instruments UK LTD - [IT40Cash,H4]</TitleText>
        <WinBtn><svg width="10" height="10"><path d="M0 5.5h10" stroke="#fff" /></svg></WinBtn>
        <WinBtn><svg width="11" height="12"><path d="M0.5 3.5h7v8h-7zM3 3V.5h7.5v8H8" stroke="#fff" fill="none" /></svg></WinBtn>
        <WinBtn><svg width="11" height="11"><path d="M.5.5l10 10M10.5.5l-10 10" stroke="#fff" /></svg></WinBtn>
      </TitleBar>
      <MenuBar>
        <MenuIcon>
          <svg width="18" height="18"><rect x="2" y="1" width="10" height="12" fill="#dfe9f5" stroke="#5f8fc0" /><rect x="6" y="6" width="11" height="11" fill="#eef4fb" stroke="#5f8fc0" /><path d="M8 14l2-4 2 3 3-5" stroke="#3f78b0" fill="none" /></svg>
        </MenuIcon>
        <MenuItem $w={36}>File</MenuItem>
        <MenuItem $w={68}>Visualizza</MenuItem>
        <MenuItem $w={60}>Inserisci</MenuItem>
        <MenuItem $w={52}>Grafici</MenuItem>
        <MenuItem $w={70}>Strumenti</MenuItem>
        <MenuItem $w={59}>Finestra</MenuItem>
        <MenuItem $w={50}>Aiuto</MenuItem>
        <MdiGroup>
          <MdiBtn><svg width="9" height="9"><rect x="1" y="6" width="6" height="2" fill="#5a6a6a" /></svg></MdiBtn>
          <MdiBtn><svg width="11" height="11"><path d="M1.5 4.5h6v5h-6zM4 4V1.5h6v5H8" stroke="#4a5a5a" fill="none" /></svg></MdiBtn>
          <MdiBtn><svg width="10" height="10"><path d="M1.5 1.5l7 7M8.5 1.5l-7 7" stroke="#4a5a5a" strokeWidth="2" /></svg></MdiBtn>
        </MdiGroup>
      </MenuBar>
      <ToolBar>
        <Grip />
        <Tool $w={24}>{icons.newChart}</Tool><Drop $w={7} />
        <Spacer $w={5} />
        <Tool $w={24}>{icons.profiles}</Tool><Drop />
        <Sep $w={12} />
        <Tool>{icons.market}</Tool><Tool>{icons.target}</Tool><Tool>{icons.folder}</Tool><Tool>{icons.nav}</Tool>
        <Sep $w={8} />
        <OrderBtn>{icons.order}<span>Nuovo ordine</span></OrderBtn>
        <Tool>{icons.auto}</Tool>
        <Sep $w={4} />
        <Grip />
        <Tool>{icons.bars}</Tool><Tool $on>{icons.candle}</Tool><Tool>{icons.line}</Tool>
        <Sep $w={6} />
        <Tool>{icons.zin}</Tool><Tool>{icons.zout}</Tool>
        <Sep $w={9} />
        <Tool>{icons.scroll}</Tool><Tool $on>{icons.autoscroll}</Tool>
        <Sep $w={8} />
        <Tool>{icons.indic}</Tool><Drop $w={6} />
        <Sep $w={4} />
        <Grip /><Spacer $w={3} />
        <Tool $on>{icons.cursor}</Tool><Tool>{icons.cross}</Tool>
        <Sep $w={7} />
        <Tool>{icons.v}</Tool><Tool>{icons.h}</Tool><Tool>{icons.trend}</Tool><Tool>{icons.channel}</Tool><Tool>{icons.fib}</Tool><Tool>{icons.a}</Tool><Tool>{icons.t}</Tool><Tool>{icons.fan}</Tool><Tool>{icons.par}</Tool><Tool>{icons.ell}</Tool><Tool>{icons.rect}</Tool><Tool>{icons.arrows}</Tool>
        <Drop $w={6} />
        <Sep $w={6} />
        <Grip />
        {['M5','M15','M30','H1','H4','D1','W1','MN'].map(t => <Tf key={t} $on={t === 'H4'}>{t}</Tf>)}
        <Sep $w={4} />
        <Spacer />
        <Tool>{icons.search}</Tool><Tool $w={28}>{icons.chat}</Tool><Spacer $w={3} />
      </ToolBar>
      <ChartArea>
        <Chart />
        <Dialog>
          <DialogHead>
            <HeadBtn>?</HeadBtn>
            <HeadBtn><svg width="12" height="12"><path d="M.5.5l11 11M11.5.5l-11 11" stroke="#8a8a8a" /></svg></HeadBtn>
          </DialogHead>
          <MsgRow>
            <MsgText><MsgSpan>Trend Is Now Down, value: -0.0114583</MsgSpan></MsgText>
            <MsgScroll><Chevron up c="#cfcfcf" /><Chevron c="#cfcfcf" /></MsgScroll>
          </MsgRow>
          <ListBox>
            <Rows>
              <Row $alt $pr={6}>Trend Is Now Down, value: -0…</Row>
              <Row $alt={false} $pr={6}>Trend Is Now Down, value: -0…</Row>
              <Row $alt $pr={16}>0.053 crossed 0.05 line down</Row>
              <Row $alt={false} $pr={6}>ArrZZx2&nbsp; trend changeed …</Row>
              <Row $alt $pr={31}>Down on 240 IT40Cash</Row>
            </Rows>
            <Scroll>
              <Chevron up c="#333" />
              <Thumb />
              <Chevron c="#333" />
            </Scroll>
          </ListBox>
          <DlgBtn />
        </Dialog>
      </ChartArea>
      <TabBar>
        {tabs.map((t, i) => <Tab key={i} $on={i === 0}>IT40Cash,{t}</Tab>)}
        <TabArrows>
          <svg width="5" height="9"><path d="M5 0v9L0 4.5z" fill="#aaa" /></svg>
          <svg width="5" height="9"><path d="M0 0v9l5-4.5z" fill="#111" /></svg>
        </TabArrows>
      </TabBar>
      <StatusBar>
        <LeadCell $w={672}>Per aiuto, premi F1</LeadCell>
        <Cell $w={116}>Default</Cell>
        <Cell $w={103} />
        <Cell $w={71} />
        <Cell $w={71} />
        <Cell $w={67} />
        <Cell $w={71} />
        <Cell $w={65} />
        <LastCell $w={130}>
          <svg width="24" height="16">
            {Array.from({ length: 11 }, (_, i) => <g key={i}><rect x={i * 2.2} y={2 + (10 - i) * .5} width="1.4" height={7 - (10 - i) * .5} fill="#6a7a10" /><rect x={i * 2.2} y="9.5" width="1.4" height="6" fill="#0e3f5f" /></g>)}
          </svg>
          <span>2069/2 kb</span>
        </LastCell>
      </StatusBar>
    </Page>
  );
}
